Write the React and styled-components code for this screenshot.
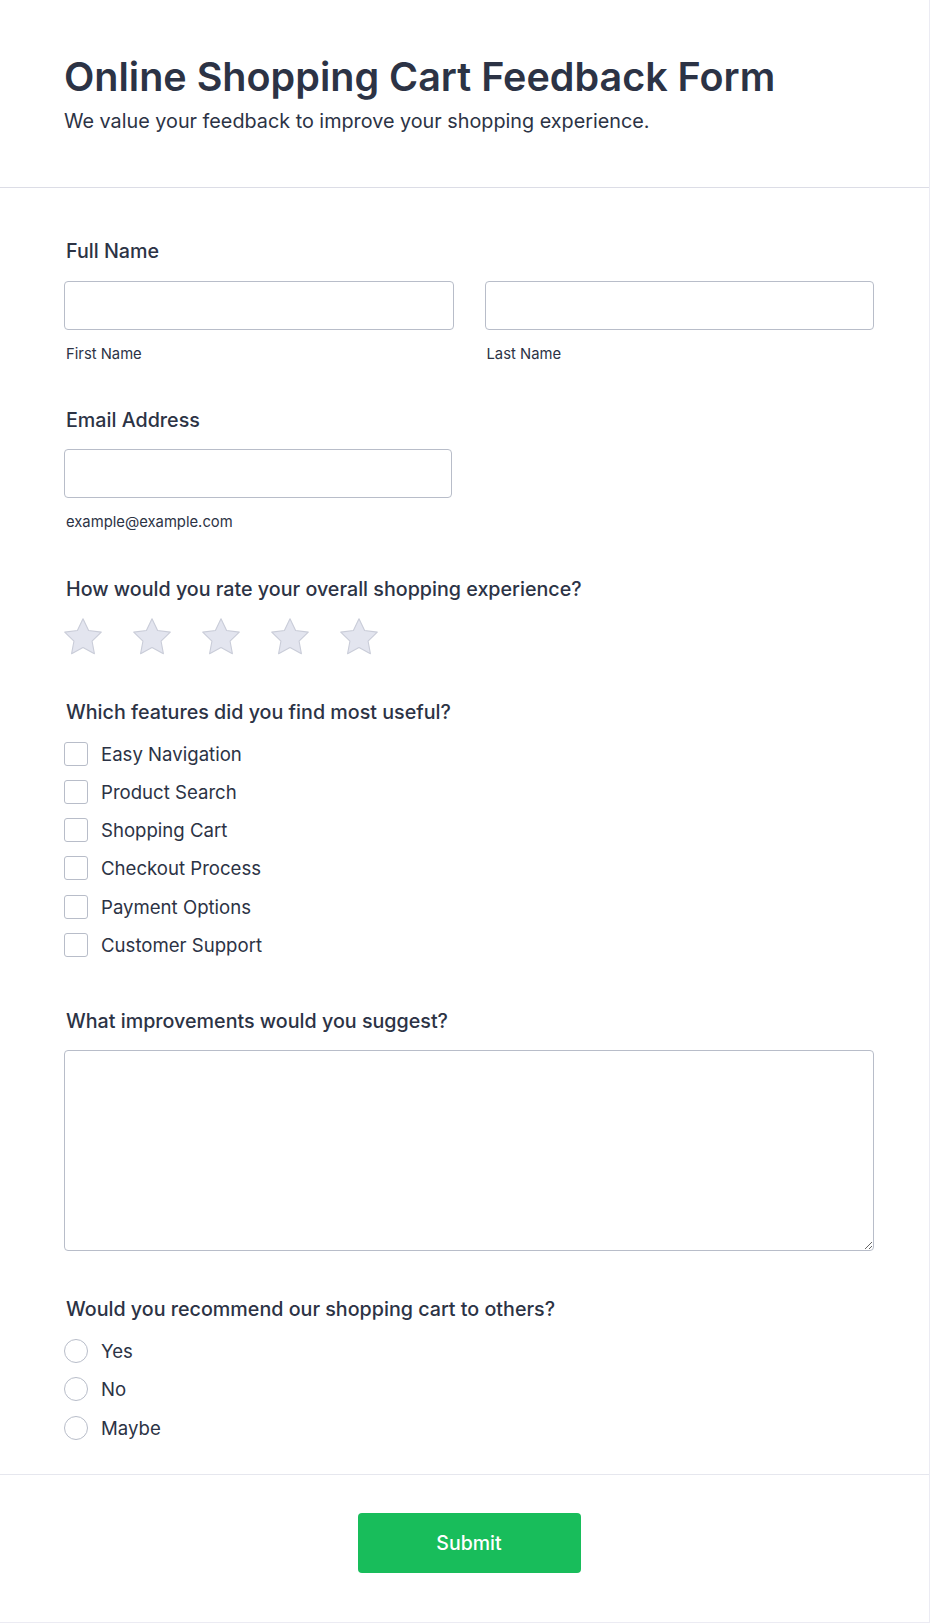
import React from "react";
import styled, { createGlobalStyle } from "styled-components";

const features = [
  "Easy Navigation",
  "Product Search",
  "Shopping Cart",
  "Checkout Process",
  "Payment Options",
  "Customer Support",
];

const answers = ["Yes", "No", "Maybe"];

const GlobalStyle = createGlobalStyle`
  * { box-sizing: border-box; }
  body {
    margin: 0;
    background: #f3f3fe;
    font-family: Inter, "Noto Sans", sans-serif;
    color: #2c3345;
  }
`;

const Card = styled.form`
  width: 930px;
  min-height: 1623px;
  background: #fff;
  border-right: 1px solid #ebebf3;
  border-bottom: 1px solid #ebebf3;
`;

const Header = styled.header`
  padding: 53px 55px 52px 64px;
  border-bottom: 1px solid #dcdde6;
`;

const Title = styled.h1`
  margin: 0;
  font-size: 39.5px;
  line-height: 48px;
  font-weight: 600;
  color: #2c3345;
`;

const Subtitle = styled.p`
  margin: 7px 0 0;
  font-size: 19.8px;
  line-height: 27px;
  color: #2c3345;
`;

const Fields = styled.div`
  display: flex;
  flex-direction: column;
  gap: 44px;
  padding: 50px 55px 33px 64px;
`;

const Field = styled.div`
  display: flex;
  flex-direction: column;
  margin-bottom: ${(p) => p.$extra || 0}px;
`;

const Label = styled.div`
  font-size: 19.7px;
  line-height: 27px;
  font-weight: 500;
  padding-left: 2px;
  margin-bottom: ${(p) => p.$gap || 16}px;
`;

const NameRow = styled.div`
  display: grid;
  grid-template-columns: 1fr 1fr;
  gap: 31px;
`;

const Input = styled.input`
  display: block;
  width: ${(p) => p.$width || "100%"};
  height: 49px;
  border: 1px solid #b8bdc9;
  border-radius: 4px;
  background: #fff;
  font: inherit;
`;

const SubLabel = styled.span`
  display: block;
  margin-top: 14px;
  padding-left: 2px;
  font-size: 14.8px;
  line-height: 21px;
  color: #2c3345;
`;

const Stars = styled.div`
  display: flex;
  gap: 31px;
  margin-top: -1px;
`;

const Options = styled.div`
  display: flex;
  flex-direction: column;
  gap: 11.3px;
`;

const Option = styled.label`
  display: flex;
  align-items: center;
  gap: 13px;
  height: 27px;
  font-size: 18.6px;
  color: #2c3345;
`;

const Box = styled.span`
  width: 24px;
  height: 24px;
  flex: none;
  border: 1px solid #b8bdc9;
  border-radius: ${(p) => (p.$round ? "50%" : "3px")};
  background: #fff;
`;

const TextArea = styled.textarea`
  display: block;
  width: 100%;
  height: 201px;
  border: 1px solid #b8bdc9;
  border-radius: 4px;
  resize: vertical;
  font: inherit;
`;

const Footer = styled.div`
  display: flex;
  justify-content: center;
  padding: 38px 55px 0 64px;
  border-top: 1px solid #e6e7ee;
`;

const SubmitButton = styled.button`
  width: 223px;
  height: 60px;
  border: none;
  border-radius: 4px;
  background: #18bd5b;
  color: #fff;
  font-family: Inter, sans-serif;
  font-size: 19.5px;
  font-weight: 500;
  cursor: pointer;
`;

function Star() {
  return (
    <svg width="38" height="37" viewBox="1.5 1.4 21 20.4">
      <path
        d="M12 1.8l3.1 6.5 7 .9-5.1 4.9 1.3 7-6.3-3.4-6.3 3.4 1.3-7L1.9 9.2l7-.9z"
        fill="#e3e5ef"
        stroke="#c9ccd8"
        strokeWidth="0.6"
        strokeLinejoin="round"
      />
    </svg>
  );
}

export default function App() {
  return (
    <>
      <GlobalStyle />
      <Card onSubmit={(e) => e.preventDefault()}>
        <Header>
          <Title>Online Shopping Cart Feedback Form</Title>
          <Subtitle>We value your feedback to improve your shopping experience.</Subtitle>
        </Header>
        <Fields>
          <Field $extra={-2}>
            <Label>Full Name</Label>
            <NameRow>
              <div>
                <Input />
                <SubLabel>First Name</SubLabel>
              </div>
              <div>
                <Input />
                <SubLabel>Last Name</SubLabel>
              </div>
            </NameRow>
          </Field>
          <Field $extra={-1}>
            <Label $gap={15}>Email Address</Label>
            <Input $width="388px" />
            <SubLabel>example@example.com</SubLabel>
          </Field>
          <Field>
            <Label>How would you rate your overall shopping experience?</Label>
            <Stars>
              {[1, 2, 3, 4, 5].map((n) => (
                <Star key={n} />
              ))}
            </Stars>
          </Field>
          <Field $extra={6}>
            <Label $gap={14}>Which features did you find most useful?</Label>
            <Options>
              {features.map((f) => (
                <Option key={f}>
                  <Box />
                  {f}
                </Option>
              ))}
            </Options>
          </Field>
          <Field $extra={1}>
            <Label $gap={15}>What improvements would you suggest?</Label>
            <TextArea />
          </Field>
          <Field>
            <Label $gap={14}>Would you recommend our shopping cart to others?</Label>
            <Options>
              {answers.map((a) => (
                <Option key={a}>
                  <Box $round />
                  {a}
                </Option>
              ))}
            </Options>
          </Field>
        </Fields>
        <Footer>
          <SubmitButton type="submit">Submit</SubmitButton>
        </Footer>
      </Card>
    </>
  );
}
